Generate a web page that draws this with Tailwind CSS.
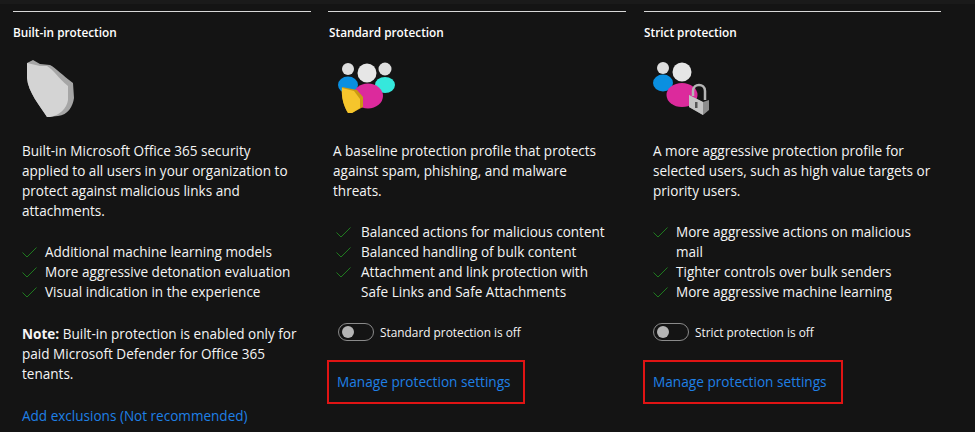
<!DOCTYPE html>
<html lang="en">
<head>
<meta charset="UTF-8">
<title>Preset security policies</title>
<script src="https://cdn.jsdelivr.net/npm/@tailwindcss/browser@4"></script>
</head>
<body class="bg-[#141414] h-[432px] w-[975px] overflow-hidden font-['Open_Sans',sans-serif] text-[#f5f5f5] text-[13.55px] leading-[20px]">
<div class="h-[4px] bg-[#1a1a1a]"></div>
<div class="flex pl-[13px] pt-[7px] gap-[17px]">

  <!-- Built-in -->
  <section class="w-[298px] border-t-[1.5px] border-[#d8d8d8]">
    <h2 class="mt-[10px] text-[11.8px] font-semibold leading-[20px] text-white">Built-in protection</h2>
    <div class="h-[68px] mt-[15.5px] ml-[13px]">
      <svg width="64" height="68" viewBox="0 0 64 68"><path d="M1 5 L7 2 L14 6 L24 7 C30 10 36 17 47 25 L48 40 C47 48 42 57 32 58 L21 59 C14 48 2 34 1 20Z" fill="#a6a6a6"/><path d="M1 5 L14 8 L21 8 C28 12 32 20 42 28 L42 42 C41 50 33 58 24 59 L21 59 C14 48 2 34 1 20Z" fill="#d4d4d4"/></svg>
    </div>
    <div class="ml-[9px] mt-[15px]">
      <p>Built-in Microsoft Office 365 security<br>applied to all users in your organization to<br>protect against malicious links and<br>attachments.</p>
      <ul class="mt-[21px]">
        <li class="flex"><svg class="w-[23px] h-[20px] shrink-0" viewBox="0 0 23 20"><path d="M0.5 10.5 L5 15 L14.5 5.5" fill="none" stroke="#1f7a1f" stroke-width="1"/></svg>Additional machine learning models</li>
        <li class="flex"><svg class="w-[23px] h-[20px] shrink-0" viewBox="0 0 23 20"><path d="M0.5 10.5 L5 15 L14.5 5.5" fill="none" stroke="#1f7a1f" stroke-width="1"/></svg>More aggressive detonation evaluation</li>
        <li class="flex"><svg class="w-[23px] h-[20px] shrink-0" viewBox="0 0 23 20"><path d="M0.5 10.5 L5 15 L14.5 5.5" fill="none" stroke="#1f7a1f" stroke-width="1"/></svg>Visual indication in the experience</li>
      </ul>
      <p class="mt-[22px]"><b class="font-bold">Note:</b> Built-in protection is enabled only for<br>paid Microsoft Defender for Office 365<br>tenants.</p>
      <a class="block mt-[22px] text-[#1f80e6]">Add exclusions (Not recommended)</a>
    </div>
  </section>

  <!-- Standard -->
  <section class="w-[298px] border-t-[1.5px] border-[#d8d8d8]">
    <h2 class="mt-[10px] ml-[1px] text-[11.8px] font-semibold leading-[20px] text-white">Standard protection</h2>
    <div class="h-[68px] mt-[15.5px] ml-[8px]">
      <svg width="64" height="68" viewBox="0 0 64 68">
        <circle cx="12" cy="11" r="6" fill="#dedede"/><circle cx="49" cy="11" r="6.5" fill="#dedede"/><circle cx="31" cy="15" r="9.5" fill="#e6e6e6"/>
        <ellipse cx="12" cy="27" rx="10" ry="8.5" fill="#0a8fe0"/><ellipse cx="49" cy="27" rx="10" ry="8" fill="#35e8dc"/>
        <ellipse cx="32" cy="38" rx="15" ry="12.5" fill="#dc2a9c"/>
        <path d="M6 29 L21 32 L27 39 L27 49 L16 55 L12 55 C8 49 5 39 6 29Z" fill="#c99a12"/>
        <path d="M6 30 L18 33 L24 41 L24 50 L16 55 L12 55 C8 49 5 39 6 30Z" fill="#f5c52c"/>
      </svg>
    </div>
    <div class="ml-[5px] mt-[15px]">
      <p>A baseline protection profile that protects<br>against spam, phishing, and malware<br>threats.</p>
      <ul class="mt-[21px] ml-[3px]">
        <li class="flex"><svg class="w-[25px] h-[20px] shrink-0" viewBox="0 0 25 20"><path d="M0.5 10.5 L5 15 L14.5 5.5" fill="none" stroke="#1f7a1f" stroke-width="1"/></svg>Balanced actions for malicious content</li>
        <li class="flex"><svg class="w-[25px] h-[20px] shrink-0" viewBox="0 0 25 20"><path d="M0.5 10.5 L5 15 L14.5 5.5" fill="none" stroke="#1f7a1f" stroke-width="1"/></svg>Balanced handling of bulk content</li>
        <li class="flex"><svg class="w-[25px] h-[20px] shrink-0" viewBox="0 0 25 20"><path d="M0.5 10.5 L5 15 L14.5 5.5" fill="none" stroke="#1f7a1f" stroke-width="1"/></svg><span>Attachment and link protection with<br>Safe Links and Safe Attachments</span></li>
      </ul>
      <div class="flex items-center mt-[20px] ml-[5px] gap-[6px] text-[11.85px]">
        <span class="flex items-center w-[36px] h-[18px] rounded-full border border-[#8a8a8a] pl-[3px]"><span class="w-[12px] h-[12px] rounded-full bg-[#b5b5b5]"></span></span>
        Standard protection is off
      </div>
      <div class="mt-[18px] -ml-[6px] w-[198px] h-[44px] border-[2.5px] border-[#e01414] flex items-center pl-[8px] text-[13.65px]">
        <a class="text-[#1f80e6]">Manage protection settings</a>
      </div>
    </div>
  </section>

  <!-- Strict -->
  <section class="w-[297px] ml-[1px] border-t-[1.5px] border-[#d8d8d8]">
    <h2 class="mt-[10px] text-[11.8px] font-semibold leading-[20px] text-white">Strict protection</h2>
    <div class="h-[68px] mt-[15.5px] ml-[8px]">
      <svg width="64" height="68" viewBox="0 0 64 68">
        <circle cx="11" cy="10" r="6" fill="#dedede"/><circle cx="30" cy="14" r="9.5" fill="#e6e6e6"/>
        <ellipse cx="11" cy="25" rx="10" ry="8.5" fill="#0a8fe0"/>
        <ellipse cx="30" cy="37" rx="15.5" ry="12" fill="#dc2a9c"/>
        <path d="M41 38 V33 C41 25 53 25 53 33 V42" fill="none" stroke="#b5b5b5" stroke-width="2.5"/>
        <path d="M37 37 L51 44 L57 42 V52 L51 57 L37 49Z" fill="#8c8c8c"/>
        <path d="M37 37 L51 44 V57 L37 49Z" fill="#c4c4c4"/>
        <rect x="43" y="44" width="2.5" height="6" fill="#555"/>
      </svg>
    </div>
    <div class="ml-[9px] mt-[15px]">
      <p>A more aggressive protection profile for<br>selected users, such as high value targets or<br>priority users.</p>
      <ul class="mt-[21px]">
        <li class="flex"><svg class="w-[23px] h-[20px] shrink-0" viewBox="0 0 23 20"><path d="M0.5 10.5 L5 15 L14.5 5.5" fill="none" stroke="#1f7a1f" stroke-width="1"/></svg><span>More aggressive actions on malicious<br>mail</span></li>
        <li class="flex"><svg class="w-[23px] h-[20px] shrink-0" viewBox="0 0 23 20"><path d="M0.5 10.5 L5 15 L14.5 5.5" fill="none" stroke="#1f7a1f" stroke-width="1"/></svg>Tighter controls over bulk senders</li>
        <li class="flex"><svg class="w-[23px] h-[20px] shrink-0" viewBox="0 0 23 20"><path d="M0.5 10.5 L5 15 L14.5 5.5" fill="none" stroke="#1f7a1f" stroke-width="1"/></svg>More aggressive machine learning</li>
      </ul>
      <div class="flex items-center mt-[20px] gap-[6px] text-[11.85px]">
        <span class="flex items-center w-[36px] h-[18px] rounded-full border border-[#8a8a8a] pl-[3px]"><span class="w-[12px] h-[12px] rounded-full bg-[#b5b5b5]"></span></span>
        Strict protection is off
      </div>
      <div class="mt-[18px] -ml-[10px] w-[200px] h-[44px] border-[2.5px] border-[#e01414] flex items-center pl-[8px] text-[13.65px]">
        <a class="text-[#1f80e6]">Manage protection settings</a>
      </div>
    </div>
  </section>
</div>
</body>
</html>
